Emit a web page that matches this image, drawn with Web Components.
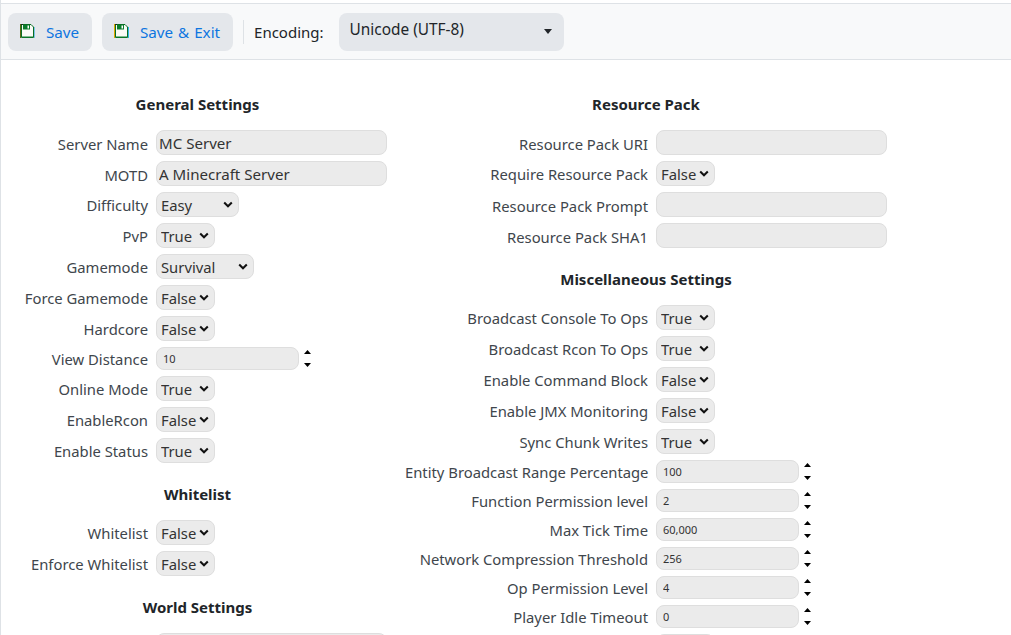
<!DOCTYPE html>
<html dir="ltr" lang="en">
<head>
<meta charset="utf-8" />
<title>Server Settings</title>
<style>
  html, body { margin: 0; height: 100%; overflow: hidden; background: #fff; }
  body { font-family: "Noto Sans", sans-serif; font-size: 14.8px; color: #212529; border-left: 1px solid #dee2e6; }
  .cols { display: flex; gap: 18px; padding: 34px 0 0 7px; }
</style>

<template id="tool-button-template">
  <style>
    :host { display: inline-block; }
    button {
      display: flex; align-items: center; gap: var(--icon-gap, 10px);
      height: 38px; padding: 0 13px 0 12px;
      border: 0; border-radius: 8px;
      background: #e4e7eb; color: #0d75e0;
      font: inherit; font-size: 15.200px; word-spacing: var(--word-gap, 0); cursor: pointer;
    }
    svg { display: block; width: 15px; height: 15px; }
  </style>
  <button>
    <svg viewBox="0 0 15 15">
      <path d="M0 0h1v14H0z" fill="var(--fringe-left, #5a6a10)"/>
      <path d="M14 3h1v11h-1z" fill="var(--fringe-right, #7cc4e8)"/>
      <path d="M1.500.5h9.500l2.500 2.500v10.500h-12z" fill="#fbfbf6" stroke="#0b6e24"/>
      <path d="M1 0h2v1H1z" fill="#16301c"/>
      <path d="M3 1h7v4.500H3z" fill="#0a7d2c"/>
      <path d="M7.500 1.500h1.500v3H7.500z" fill="#fff"/>
      <path d="M2 12.500h11v1H2z" fill="#0a7d2c"/>
    </svg>
    <slot></slot>
  </button>
</template>

<template id="encoding-select-template">
  <style>
    :host { display: inline-block; position: relative; }
    select {
      display: block; appearance: none; width: 225px; height: 38px;
      padding: 0 11px 4px; border: 0; border-radius: 8px;
      background: #e4e7eb; color: #212529; font: inherit; font-size: 15.400px;
    }
    svg { position: absolute; right: 12px; top: 16px; width: 8px; height: 5px; pointer-events: none; }
  </style>
  <select><option>Unicode (UTF-8)</option></select>
  <svg viewBox="0 0 8 5"><path d="M0 0h8L4 5z" fill="#212529"/></svg>
</template>

<template id="app-toolbar-template">
  <style>
    :host {
      display: flex; align-items: center; gap: 10px;
      height: 55px; padding: 0 7px;
      margin-top: 3px;
      background: #f8f9fa;
      border-top: 1px solid #dee2e6; border-bottom: 1px solid #dee2e6;
    }
  </style>
  <slot></slot>
</template>

<template id="tool-divider-template">
  <style>
    :host { display: block; width: 1px; height: 24px; background: #dee2e6; }
  </style>
</template>

<template id="tool-label-template">
  <style>
    :host { display: block; margin-right: 5px; color: #212529; font-size: 15px; }
  </style>
  <slot></slot>
</template>

<template id="settings-column-template">
  <style>
    :host { display: block; flex: none; }
  </style>
  <slot></slot>
</template>

<template id="settings-section-template">
  <style>
    :host { display: block; margin-bottom: 21px; }
    h2 {
      margin: 0 0 16px; font-size: 15px; line-height: 20px; font-weight: 700;
      text-align: center; color: #212529;
    }
    .rows { display: grid; row-gap: 6px; }
  </style>
  <h2></h2>
  <div class="rows"><slot></slot></div>
</template>

<template id="setting-row-template">
  <style>
    :host { display: flex; align-items: center; gap: 8px; color: #40464c; }
    label { flex: none; width: var(--label-width, 140px); text-align: right; white-space: nowrap; }
    :host([type="text"]) label { padding-top: 3px; }
    .field { flex: none; height: 25px; box-sizing: border-box; border: 1px solid #dedede; border-radius: 8px; background: #ebebeb; color: #333; font: inherit; }
    input.field { padding: 0 2px; outline: 0; font-size: 15.100px; }
    select.field { appearance: none; padding: 0 0 0 4px; }
    .wrap { position: relative; flex: none; display: block; }
    .chev { position: absolute; right: 6px; top: 9px; width: 10px; height: 7px; pointer-events: none; }
    input.num { height: 23px; font-size: 11px; padding-left: 6px; appearance: textfield; }
    .spin { flex: none; height: 23px; margin-left: -3px; display: flex; flex-direction: column; justify-content: space-between; padding: 3px 0; box-sizing: border-box; }
    .spin svg { display: block; width: 7px; height: 4px; }
  </style>
  <label><slot></slot></label>
</template>

<script>
      class ToolButton extends HTMLElement {
        constructor() {
          super();
          this.attachShadow({mode: 'open'}).appendChild(document.querySelector('#tool-button-template').content.cloneNode(true));
        }
      }

      class EncodingSelect extends HTMLElement {
        constructor() {
          super();
          this.attachShadow({mode: 'open'}).appendChild(document.querySelector('#encoding-select-template').content.cloneNode(true));
        }
      }

      class AppToolbar extends HTMLElement {
        constructor() {
          super();
          this.attachShadow({mode: 'open'}).appendChild(document.querySelector('#app-toolbar-template').content.cloneNode(true));
        }
      }

      class ToolDivider extends HTMLElement {
        constructor() {
          super();
          this.attachShadow({mode: 'open'}).appendChild(document.querySelector('#tool-divider-template').content.cloneNode(true));
        }
      }

      class ToolLabel extends HTMLElement {
        constructor() {
          super();
          this.attachShadow({mode: 'open'}).appendChild(document.querySelector('#tool-label-template').content.cloneNode(true));
        }
      }

      class SettingsColumn extends HTMLElement {
        constructor() {
          super();
          this.attachShadow({mode: 'open'}).appendChild(document.querySelector('#settings-column-template').content.cloneNode(true));
        }
      }

      class SettingsSection extends HTMLElement {
        constructor() {
          super();
          this.attachShadow({mode: 'open'}).appendChild(document.querySelector('#settings-section-template').content.cloneNode(true));
        }
        connectedCallback() {
          this.shadowRoot.querySelector('h2').textContent = this.getAttribute('heading');
        }
      }

      // One label + control line. type is text, select or number.
      class SettingRow extends HTMLElement {
        constructor() {
          super();
          this.attachShadow({mode: 'open'}).appendChild(document.querySelector('#setting-row-template').content.cloneNode(true));
        }
        connectedCallback() {
          const type = this.getAttribute('type');
          const value = this.getAttribute('value') || '';
          const root = this.shadowRoot;
          if (type === 'select') {
            const wrap = document.createElement('span');
            wrap.className = 'wrap';
            const select = document.createElement('select');
            select.className = 'field';
            select.style.width = (this.getAttribute('width') || 59) + 'px';
            select.innerHTML = '<option>' + value + '</option>';
            wrap.appendChild(select);
            wrap.insertAdjacentHTML('beforeend', '<svg class="chev" viewBox="0 0 10 7"><path d="M1.200 1.500 5 5.300l3.800-3.800" fill="none" stroke="#111" stroke-width="2"/></svg>');
            root.appendChild(wrap);
          } else if (type === 'number') {
            const input = document.createElement('input');
            input.className = 'field num';
            input.value = value;
            input.style.width = '143px';
            root.appendChild(input);
            root.appendChild(document.createRange().createContextualFragment(
              '<div class="spin"><svg viewBox="0 0 8 4" preserveAspectRatio="none"><path d="M0 4h8L4 0z"/></svg><svg viewBox="0 0 8 4" preserveAspectRatio="none"><path d="M0 0h8L4 4z"/></svg></div>'));
          } else {
            const input = document.createElement('input');
            input.className = 'field';
            input.value = value;
            input.style.width = '231px';
            root.appendChild(input);
          }
        }
      }

      customElements.define('tool-button', ToolButton);
      customElements.define('encoding-select', EncodingSelect);
      customElements.define('app-toolbar', AppToolbar);
      customElements.define('tool-divider', ToolDivider);
      customElements.define('tool-label', ToolLabel);
      customElements.define('settings-column', SettingsColumn);
      customElements.define('settings-section', SettingsSection);
      customElements.define('setting-row', SettingRow);
</script>
</head>
<body>
  <app-toolbar>
    <tool-button style="--icon-gap:11px;width:84px">Save</tool-button>
    <tool-button style="--word-gap:1px;--icon-gap:11px;--fringe-left:#e0a800;--fringe-right:#33b5e5">Save &amp; Exit</tool-button>
    <tool-divider></tool-divider>
    <tool-label>Encoding:</tool-label>
    <encoding-select></encoding-select>
  </app-toolbar>

  <div class="cols">
    <settings-column style="--label-width:140px">
      <settings-section heading="General Settings">
        <setting-row type="text" value="MC Server">Server Name</setting-row>
        <setting-row type="text" value="A Minecraft Server">MOTD</setting-row>
        <setting-row type="select" value="Easy" width="83">Difficulty</setting-row>
        <setting-row type="select" value="True">PvP</setting-row>
        <setting-row type="select" value="Survival" width="98">Gamemode</setting-row>
        <setting-row type="select" value="False">Force Gamemode</setting-row>
        <setting-row type="select" value="False">Hardcore</setting-row>
        <setting-row type="number" value="10">View Distance</setting-row>
        <setting-row type="select" value="True">Online Mode</setting-row>
        <setting-row type="select" value="False">EnableRcon</setting-row>
        <setting-row type="select" value="True">Enable Status</setting-row>
      </settings-section>
      <settings-section heading="Whitelist">
        <setting-row type="select" value="False">Whitelist</setting-row>
        <setting-row type="select" value="False">Enforce Whitelist</setting-row>
      </settings-section>
      <settings-section heading="World Settings">
        <setting-row type="text"></setting-row>
      </settings-section>
    </settings-column>

    <settings-column style="--label-width:243px">
      <settings-section heading="Resource Pack">
        <setting-row type="text">Resource Pack URI</setting-row>
        <setting-row type="select" value="False">Require Resource Pack</setting-row>
        <setting-row type="text">Resource Pack Prompt</setting-row>
        <setting-row type="text">Resource Pack SHA1</setting-row>
      </settings-section>
      <settings-section heading="Miscellaneous Settings">
        <setting-row type="select" value="True">Broadcast Console To Ops</setting-row>
        <setting-row type="select" value="True">Broadcast Rcon To Ops</setting-row>
        <setting-row type="select" value="False">Enable Command Block</setting-row>
        <setting-row type="select" value="False">Enable JMX Monitoring</setting-row>
        <setting-row type="select" value="True">Sync Chunk Writes</setting-row>
        <setting-row type="number" value="100">Entity Broadcast Range Percentage</setting-row>
        <setting-row type="number" value="2">Function Permission level</setting-row>
        <setting-row type="number" value="60,000">Max Tick Time</setting-row>
        <setting-row type="number" value="256">Network Compression Threshold</setting-row>
        <setting-row type="number" value="4">Op Permission Level</setting-row>
        <setting-row type="number" value="0">Player Idle Timeout</setting-row>
        <setting-row type="select" value="True"></setting-row>
      </settings-section>
    </settings-column>
  </div>
</body>
</html>
